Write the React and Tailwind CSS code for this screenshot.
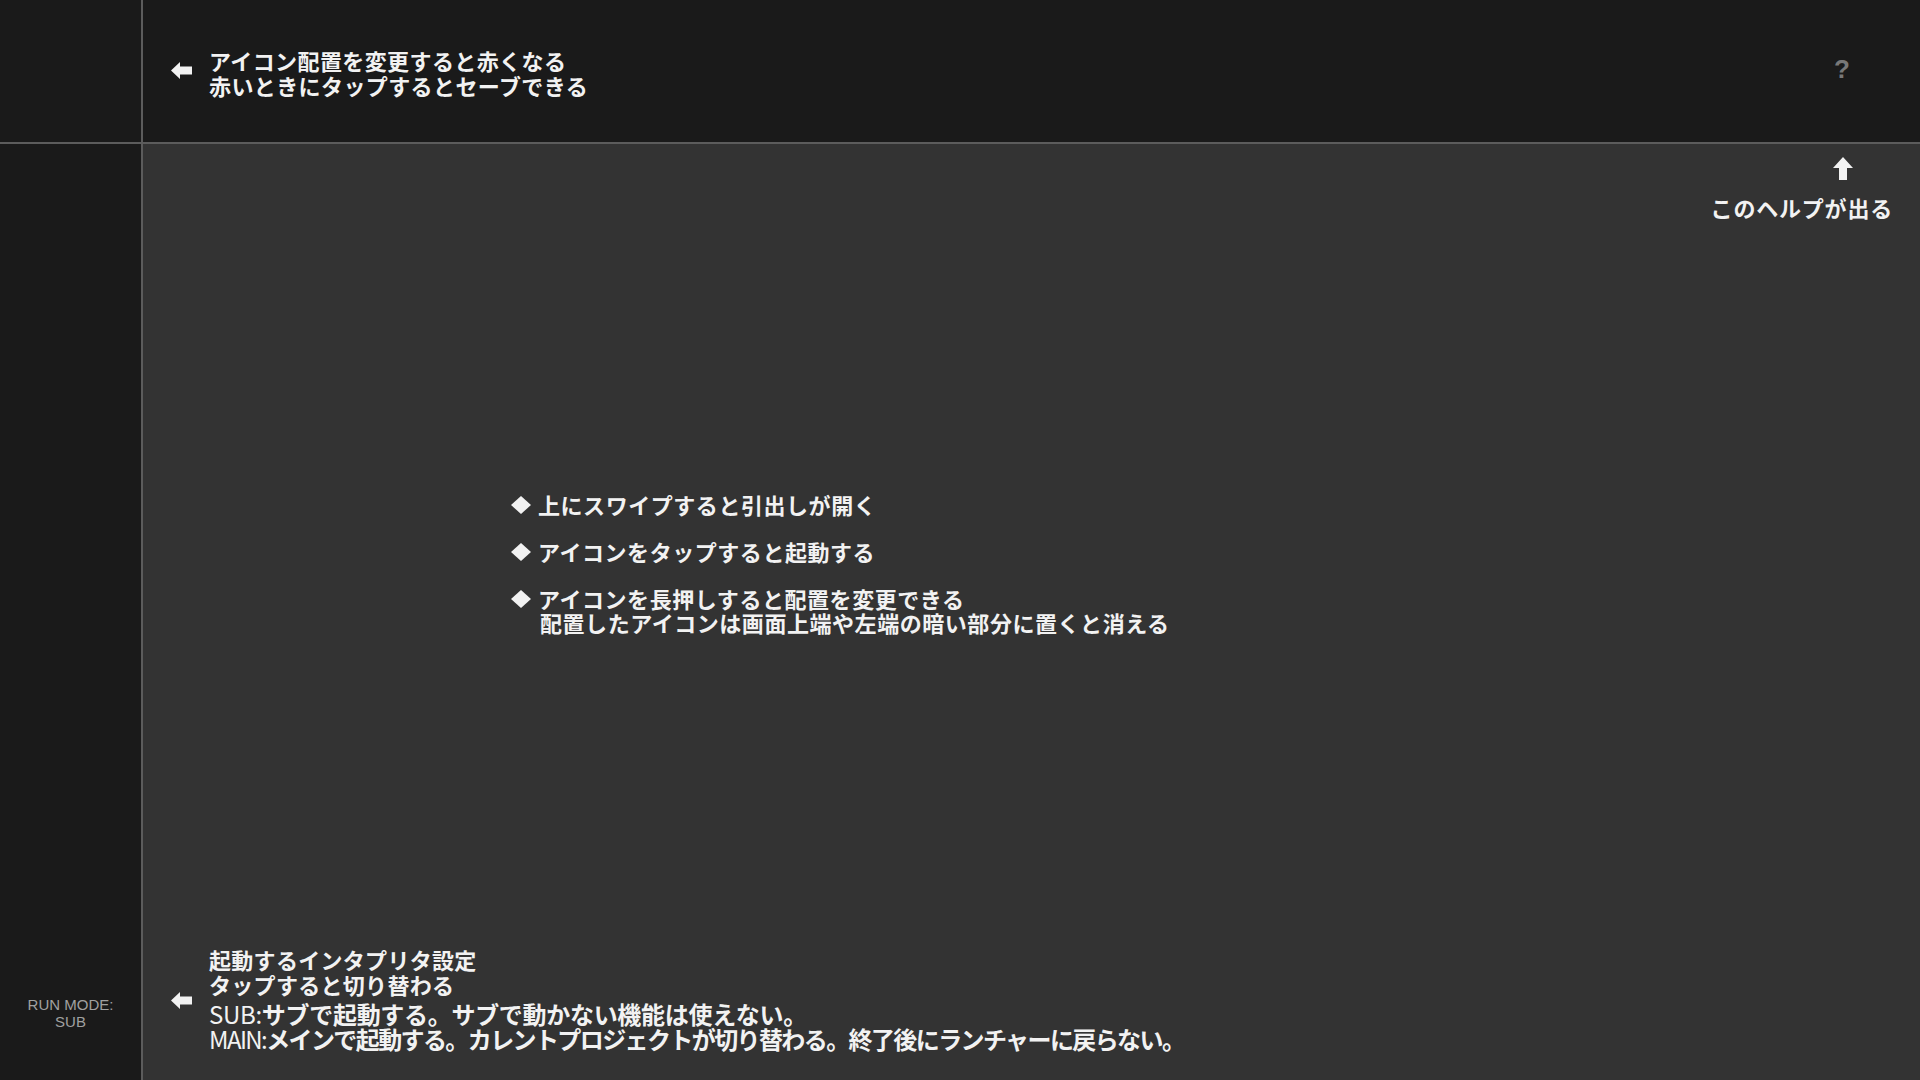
const jp = "font-['Noto_Sans_CJK_JP','Noto_Sans',sans-serif]";

const ArrowLeft = ({ className = '' }) => (
  <svg width="21" height="17" viewBox="0 0 21 17" className={`shrink-0 ${className}`}>
    <path d="M0 8.5 L9 0 L9 4.5 L21 4.5 L21 12.5 L9 12.5 L9 17 Z" fill="#f2f2f2" />
  </svg>
);

const ArrowUp = () => (
  <svg width="20" height="23" viewBox="0 0 20 23">
    <path d="M10 0 L20 11 L14 11 L14 23 L6 23 L6 11 L0 11 Z" fill="#f2f2f2" />
  </svg>
);

const Diamond = () => (
  <svg width="22" height="18" viewBox="0 0 22 18" className="shrink-0 mt-[4px]">
    <path d="M11 0 L21 9 L11 18 L1 9 Z" fill="#f2f2f2" />
  </svg>
);

const tips = [
  ['上にスワイプすると引出しが開く'],
  ['アイコンをタップすると起動する'],
  ['アイコンを長押しすると配置を変更できる', '配置したアイコンは画面上端や左端の暗い部分に置くと消える'],
];

const App = () => {
  return (
    <div className={`flex w-[1920px] h-[1080px] overflow-hidden bg-[#333333] text-[#f2f2f2] ${jp}`}>
      {/* left rail */}
      <div className="w-[143px] shrink-0 flex flex-col bg-[#1a1a1a] border-r-2 border-[#5c5c5c]">
        <div className="h-[144px] border-b-2 border-[#5c5c5c]" />
        <div className="mt-auto pb-[50px] text-center font-['Liberation_Sans',sans-serif] text-[15px] leading-[17px] text-[#a0a0a0]">
          <div>RUN MODE:</div>
          <div>SUB</div>
        </div>
      </div>

      <div className="flex-1 flex flex-col">
        {/* top bar */}
        <div className="h-[144px] shrink-0 flex items-center bg-[#1a1a1a] border-b-2 border-[#5c5c5c] pl-[28px] pt-[3px]">
          <ArrowLeft className="mb-[5px]" />
          <div className="ml-[17px] text-[22px] leading-[25px] tracking-[0.4px] font-bold">
            <div>アイコン配置を変更すると赤くなる</div>
            <div>赤いときにタップするとセーブできる</div>
          </div>
          <div className="ml-auto mr-[70px] mb-[6px] text-[26px] font-bold text-[#787878] font-['Liberation_Sans',sans-serif]">?</div>
        </div>

        {/* main area */}
        <div className="flex-1 flex flex-col">
          <div className="flex flex-col items-end pt-[13px] pr-[27px]">
            <div className="mr-[40px]">
              <ArrowUp />
            </div>
            <div className="mt-[15px] text-[22px] leading-[25px] tracking-[0.8px] font-bold">このヘルプが出る</div>
          </div>

          <div className="mt-[272px] pl-[367px] flex flex-col gap-[23px]">
            {tips.map((lines, i) => (
              <div key={i} className="flex gap-[6px]">
                <Diamond />
                <div className="text-[22px] leading-[24px] tracking-[0.55px] font-bold">
                  {lines.map((l, j) => (
                    <div key={j} className={j > 0 ? 'pl-[2px]' : ''}>{l}</div>
                  ))}
                </div>
              </div>
            ))}
          </div>

          <div className="mt-auto flex items-center pl-[28px] pb-[29px]">
            <ArrowLeft className="mt-[2px]" />
            <div className="ml-[17px] font-bold">
              <div className="text-[22px] leading-[25px] tracking-[0.3px]">
                <div>起動するインタプリタ設定</div>
                <div>タップすると切り替わる</div>
              </div>
              <div className="mt-[4px] text-[24px] leading-[25px]">
                <div className="tracking-[-0.3px]"><span className="font-normal">SUB:</span>サブで起動する。サブで動かない機能は使えない。</div>
                <div className="tracking-[-1.6px]"><span className="font-normal">MAIN:</span>メインで起動する。カレントプロジェクトが切り替わる。終了後にランチャーに戻らない。</div>
              </div>
            </div>
          </div>
        </div>
      </div>
    </div>
  );
};

export default App;
